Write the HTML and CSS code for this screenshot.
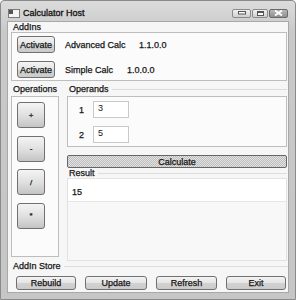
FILE: index.html
```html
<!DOCTYPE html>
<html>
<head>
<meta charset="utf-8">
<link rel="stylesheet" href="styles.css">
</head>
<body>
<div class="window">
  <div class="titlebar">
    <svg class="appicon" width="12" height="9" viewBox="0 0 12 9">
      <rect x="0.5" y="0.5" width="11" height="8" fill="#f4f4f4" stroke="#7a7a7a"/>
      <rect x="1" y="1" width="4" height="4" fill="#555"/>
    </svg>
    <span class="title">Calculator Host</span>
    <div class="controls">
      <span class="cbtn min"><svg width="8" height="4" viewBox="0 0 8 4"><rect x="0.5" y="0.5" width="7" height="2.5" fill="#fff" stroke="#555"/></svg></span>
      <span class="cbtn max"><svg width="7" height="5" viewBox="0 0 7 5"><rect x="0.5" y="0.5" width="6" height="4" fill="#fff" stroke="#555"/><rect x="1" y="1" width="5" height="1" fill="#555"/></svg></span>
      <span class="cbtn close"><svg width="9" height="6" viewBox="0 0 9 6"><path d="M1 0.5 L8 5.5 M8 0.5 L1 5.5" stroke="#fff" stroke-width="1.8"/></svg></span>
    </div>
  </div>
  <div class="client">
    <div class="ghead"><span class="glabel">AddIns</span></div>
    <div class="box addins">
      <div class="addin">
        <button class="btn activate">Activate</button>
        <span class="aname">Advanced Calc</span>
        <span class="aver">1.1.0.0</span>
      </div>
      <div class="addin">
        <button class="btn activate">Activate</button>
        <span class="aname">Simple Calc</span>
        <span class="aver short">1.0.0.0</span>
      </div>
    </div>
    <div class="middle">
      <div class="opscol">
        <div class="ghead tall"><span class="glabel">Operations</span></div>
        <div class="box ops">
          <button class="btn op">+</button>
          <button class="btn op">-</button>
          <button class="btn op">/</button>
          <button class="btn op">*</button>
        </div>
      </div>
      <div class="rightcol">
        <div class="ghead tall"><span class="glabel">Operands</span><span class="gline"></span></div>
        <div class="box operands">
          <div class="operand"><span class="onum">1</span><span class="tbox">3</span></div>
          <div class="operand"><span class="onum">2</span><span class="tbox">5</span></div>
        </div>
        <button class="btn calc">Calculate</button>
        <div class="ghead"><span class="glabel">Result</span><span class="gline"></span></div>
        <div class="box result">
          <div class="resval">15</div>
        </div>
      </div>
    </div>
    <div class="ghead"><span class="glabel">AddIn Store</span><span class="gline"></span></div>
    <div class="store">
      <button class="btn sbtn">Rebuild</button>
      <button class="btn sbtn">Update</button>
      <button class="btn sbtn">Refresh</button>
      <button class="btn sbtn">Exit</button>
    </div>
  </div>
</div>
</body>
</html>
```

FILE: styles.css
```css
* { box-sizing: border-box; }
html, body { margin: 0; padding: 0; background: #fff; }
body { font-family: "Liberation Sans", Arial, sans-serif; font-size: 9px; color: #151515; }

.window {
  width: 296px; height: 300px;
  background: linear-gradient(#dcdcdc, #c9c9c9 30px, #c6c6c6);
  border: 1px solid #8a8a8a;
  border-radius: 4px 4px 0 0;
  display: flex; flex-direction: column;
}
.titlebar {
  height: 20px;
  display: flex; align-items: center;
  padding: 4px 0 0 7px;
}
.appicon { display: block; margin-right: 3px; }
.title { font-size: 9px; -webkit-text-stroke: 0.3px #111; color: #111; }
.controls { margin-left: auto; margin-right: 7px; display: flex; gap: 1px; }
.cbtn {
  height: 9px; display: flex; align-items: center; justify-content: center;
  border: 1px solid #8a8a8a; border-radius: 2px;
  background: linear-gradient(#f0f0f0, #cfcfcf);
}
.cbtn.min { width: 19px; }
.cbtn.max { width: 16px; }
.cbtn.close { width: 19px; background: linear-gradient(#b8b8b8, #8e8e8e); border-color: #6a6a6a; }
.cbtn svg { display: block; }

.client {
  margin: 0 6px 6px 6px;
  height: 272px;
  background: #f6f6f6;
  border: 1px solid #a8a8a8;
  padding: 0 0 0 3px;
  display: flex; flex-direction: column;
}
.ghead { height: 10px; display: flex; align-items: flex-end; padding-left: 2px; }
.ghead.tall { height: 12px; align-items: center; padding-bottom: 1px; }
.glabel { line-height: 9px; -webkit-text-stroke: 0.25px #151515; white-space: nowrap; }
.gline { flex: 1; border-top: 1px solid #dcdcdc; margin: 0 0 0 3px; align-self: center; }
.ghead:not(.tall) .gline { align-self: flex-end; margin-bottom: 4px; }

.box { border: 1px solid #bdbdbd; background: #fbfbfb; }
.addins { height: 49px; margin-right: 1px; padding: 3px 0 0 5px; display: flex; flex-direction: column; gap: 8px; }
.addin { display: flex; align-items: center; height: 17px; }
.aname { margin-left: 10px; width: 74px; -webkit-text-stroke: 0.25px #151515; }
.addin .short { margin-left: -12px; }
.aver { -webkit-text-stroke: 0.25px #151515; }

.btn {
  font-family: "Liberation Sans", Arial, sans-serif; font-size: 9px; color: #151515;
  -webkit-text-stroke: 0.25px #151515;
  border: 1px solid #707070; border-radius: 3px;
  background: linear-gradient(#f4f4f4, #e4e4e4 50%, #d2d2d2 51%, #cbcbcb);
  padding: 0; margin: 0;
  display: flex; align-items: center; justify-content: center;
}
.activate { width: 38px; height: 17px; }

.middle { display: flex; margin-top: 3px; height: 177px; margin-right: 1px; }
.opscol { width: 48px; display: flex; flex-direction: column; }
.ops { height: 161px; padding: 5px 0 0 5px; display: flex; flex-direction: column; gap: 7.5px; }
.op { width: 28px; height: 26px; font-size: 8px; background: linear-gradient(#f4f4f4, #dedede 55%, #c4c4c4); }
.rightcol { flex: 1; margin-left: 8px; display: flex; flex-direction: column; }
.operands { height: 51px; padding: 4px 0 0 11px; display: flex; flex-direction: column; gap: 8px; }
.operand { display: flex; align-items: center; height: 17px; }
.onum { width: 14px; -webkit-text-stroke: 0.25px #151515; }
.tbox {
  width: 36px; height: 17px; background: #fff; border: 1px solid #c9c9c9;
  padding: 1px 0 0 4px; line-height: 10px;
}
.calc {
  margin-top: 8px; height: 13px; width: 100%;
  border: 1px solid #666; border-radius: 2px;
  background: repeating-conic-gradient(#bdbdbd 0 25%, #e2e2e2 0 50%) 0 0 / 2px 2px;
}
.result { height: 83px; border-color: #e2e2e2; background: #f8f8f8; }
.resval {
  height: 23px; background: #fff; border-bottom: 1px solid #e6e6e6;
  padding: 8px 0 0 4px; line-height: 10px; -webkit-text-stroke: 0.25px #151515;
}

.store { display: flex; margin-top: 5px; padding-left: 5px; gap: 9px; }
.sbtn { width: 60px; height: 14px; }
.sbtn:nth-child(2) { width: 62px; }
.sbtn:nth-child(3) { width: 61px; }
```
